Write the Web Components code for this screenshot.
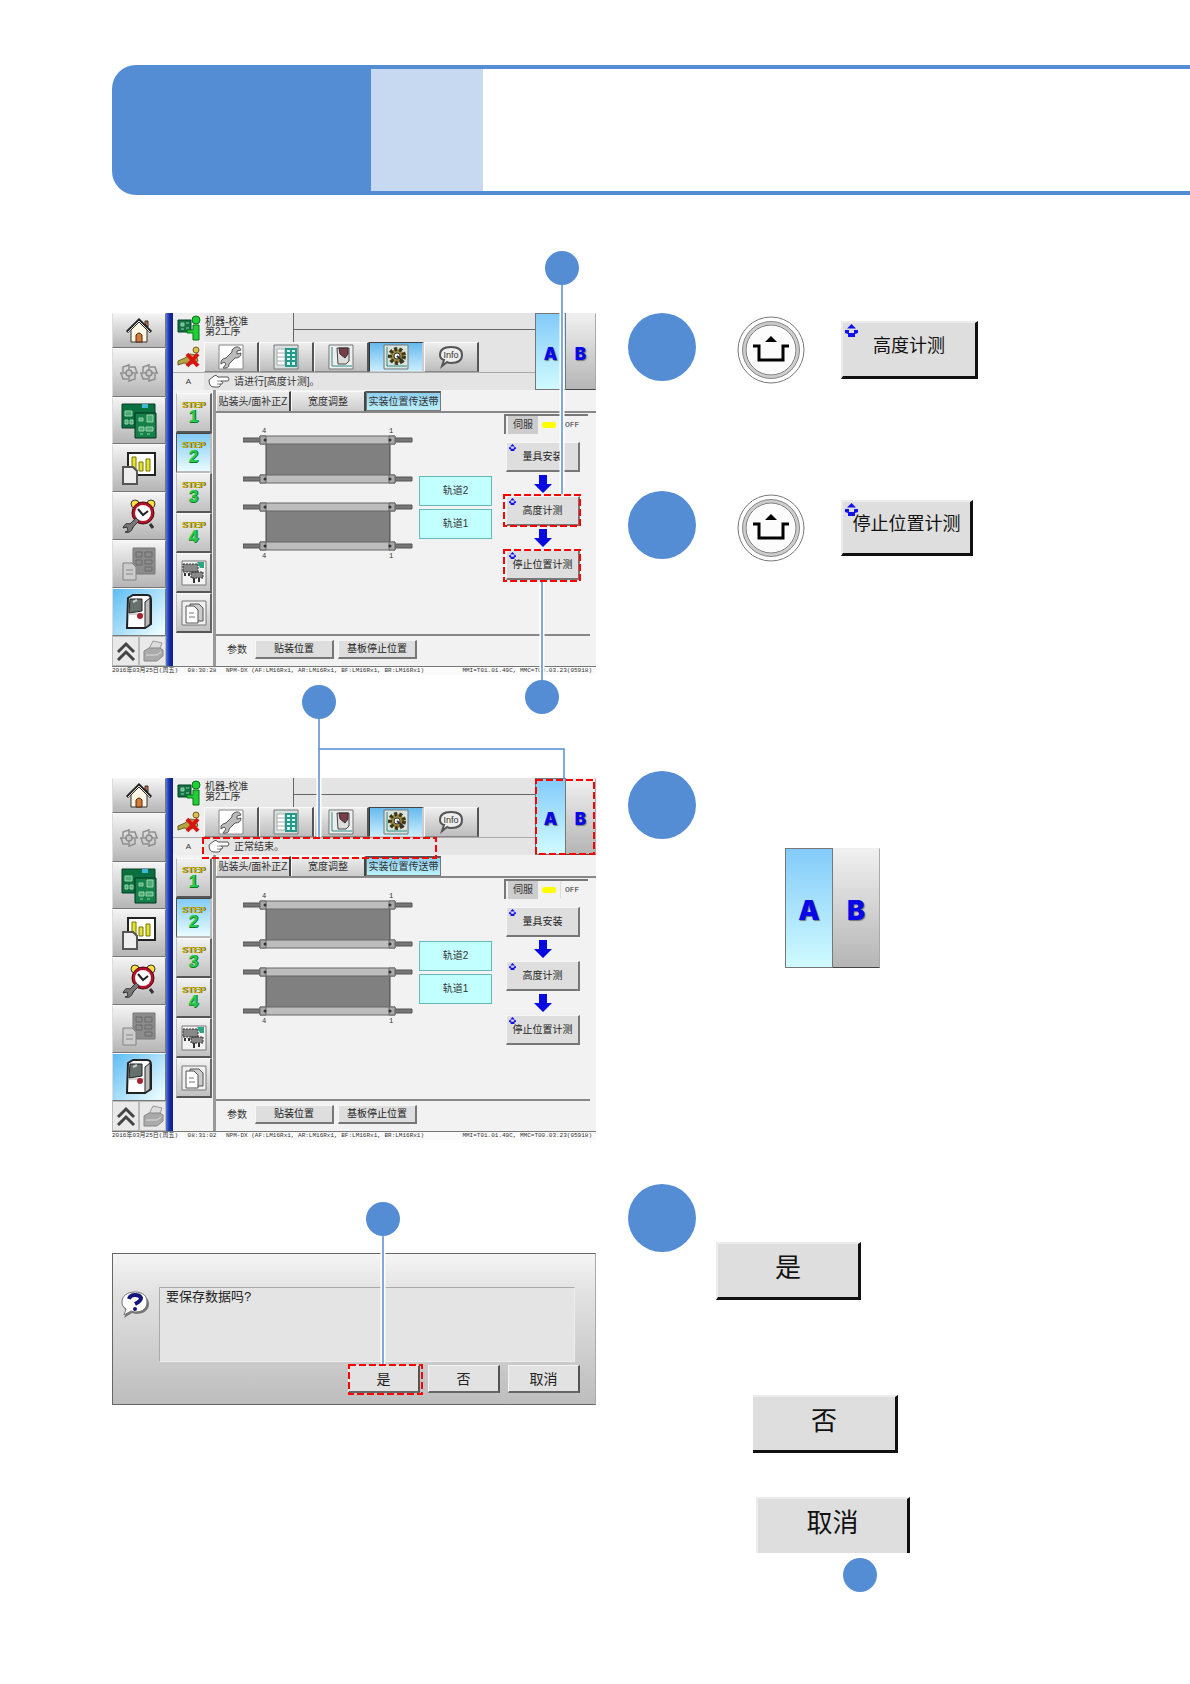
<!DOCTYPE html>
<html lang="zh-CN">
<head>
<meta charset="utf-8">
<title>机器-校准</title>
<style>
    body {
        margin: 0;
        background: #fff;
        color: #111;
        font-family: "Liberation Sans", "Noto Sans CJK SC", sans-serif;
    }
</style>
</head>
<body>
<manual-page></manual-page>

<script>
// Small pictures shared by the machine screens
const FAN = `<path d="M10 3v18M1 12h18M10 4L4 6v5M18 12l-2-6h-5M10 20l6-2v-5M2 12l2 6h5"/><circle cx="10" cy="12" r="3" fill="#c8c8c8"/>`;
const ICONS = {
    home: `<svg width="28" height="28" viewBox="0 0 28 28"><path d="M6 13v12h16V13L14 5z" fill="#fff6e4" stroke="#333"/><path d="M20 4h3v6l-3-3z" fill="#c96b3a" stroke="#333"/><path d="M2 15L14 3l12 12" fill="none" stroke="#222" stroke-width="3"/><path d="M3 15L14 4l11 11" fill="none" stroke="#ddd"/><path d="M11 25v-7q3-4 6 0v7z" fill="#cf7d38" stroke="#53250d"/></svg>`,
    fans: `<svg width="40" height="24" viewBox="0 0 40 24" fill="none" stroke="#8e8e8e" stroke-width="1.500"><g>${FAN}</g><g transform="translate(20 0)">${FAN}</g></svg>`,
    boards: `<svg width="38" height="38" viewBox="0 0 38 38"><path d="M2 2h33v24H2z" fill="#0b7040" stroke="#063c25"/><path d="M22 2h6v4h-6z" fill="#39b8d8"/><path d="M15 11h21v25H15z" fill="#14804a" stroke="#052f1c"/><path d="M5 9h7v5H5zM5 18h3v4H5zM10 18h3v4h-3zM19 16h4v3h-4zM27 13h6v7h-6zM19 25h5v4h-5zM26 25h7v4h-7zM20 32h3M27 32h3" fill="#4cab72" stroke="#9ad2a8"/></svg>`,
    chart: `<svg width="36" height="36" viewBox="0 0 36 36"><path d="M7 3h27v22H7z" fill="#fff" stroke="#222" stroke-width="2"/><path d="M11 7h4v14h-4zM18 12h4v9h-4zM25 9h4v12h-4z" fill="#e3e233" stroke="#777600"/><path d="M2 17h10l4 4v13H2z" fill="#eee" stroke="#555" stroke-width="2"/></svg>`,
    alarm: `<svg width="36" height="36" viewBox="0 0 36 36"><path d="M13 26l-3 4M29 26l3 4" stroke="#333" stroke-width="3"/><circle cx="14" cy="6" r="4" fill="#ffe23b" stroke="#333"/><circle cx="30" cy="6" r="4" fill="#ffe23b" stroke="#333"/><circle cx="22" cy="15" r="11" fill="#b5122a" stroke="#4a0711"/><circle cx="22" cy="15" r="8" fill="#fff"/><path d="M17 11l5 6 5-4" fill="none" stroke="#222" stroke-width="2"/><path d="M15 20l-6 6q-5-2-7 4l4-1 1 4-3 1q6 2 8-5l6-6z" fill="#777" stroke="#333"/></svg>`,
    library: `<svg width="36" height="36" viewBox="0 0 36 36"><path d="M12 2h22v26H12z" fill="#8c8c8c" stroke="#777"/><path d="M15 6h6v5h-6zM24 6h7v5h-7zM15 14h6v5h-6zM24 14h7v4h-7zM24 21h7v4h-7z" fill="none" stroke="#6b6b6b"/><path d="M2 17h9l4 4v13H2z" fill="#ccc" stroke="#828282"/><path d="M5 24h7M5 28h7" stroke="#888"/></svg>`,
    machine: `<svg width="30" height="36" viewBox="0 0 30 36"><path d="M4 4l5-3h14q4 0 4 5v24l-6 4H3z" fill="#fff" stroke="#222" stroke-width="2"/><path d="M21 8l5-4v26l-5 4z" fill="#bcbcbc" stroke="#222"/><path d="M6 5h12v12l-13 2z" fill="#66716e" stroke="#222"/><path d="M9 8l4-2" stroke="#ccc" stroke-width="2"/><path d="M4 20h16" stroke="#aaa"/><circle cx="16" cy="22" r="3" fill="#a5212e"/></svg>`,
    up: `<svg width="20" height="20" viewBox="0 0 20 20" fill="none" stroke="#444" stroke-width="3"><path d="M2 11l8-8 8 8M2 19l8-8 8 8"/></svg>`,
    printer: `<svg width="24" height="24" viewBox="0 0 24 24"><path d="M8 10l4-8 9 2-3 8z" fill="#ddd" stroke="#999"/><path d="M3 12l5-3h11l3 2v6l-6 5H3z" fill="#aaa" stroke="#888"/><path d="M5 16h11l4-3" fill="none" stroke="#ddd"/></svg>`,
    operator: `<svg width="26" height="26" viewBox="0 0 26 26"><path d="M2 5h13v12H2z" fill="#137244" stroke="#063c25"/><path d="M5 8h3v3H5zM10 8h3M10 13h3M5 14h3" fill="#62b77e" stroke="#94ceaa"/><circle cx="20" cy="5" r="4" fill="#20ce35" stroke="#08731a"/><path d="M17 10h6v15h-6v-7h-6v-3h6z" fill="#20ce35" stroke="#08731a"/></svg>`,
    cross: `<svg width="26" height="24" viewBox="0 0 26 24"><circle cx="20" cy="5" r="3" fill="#d9c04a" stroke="#75601a"/><path d="M2 16l7-3 5-4 6 1 2 6-6 3-8-1-6 2z" fill="#b4a444" stroke="#6a6021"/><path d="M11 9l11 12M22 9L11 21" stroke="#dc1313" stroke-width="4"/></svg>`,
    wrench: `<svg width="26" height="26" viewBox="0 0 26 26"><path d="M1 1h24v24H1z" fill="#fff" stroke="#888"/><path d="M16 4q5-3 7 2l-4 1v3l4-1q0 5-6 5l-6 6q0 5-6 4l3-4-2-2-3 2q-1-5 5-6l6-6q-1-2 2-4z" fill="#bbb" stroke="#555"/></svg>`,
    table: `<svg width="26" height="26" viewBox="0 0 26 26"><path d="M1 1h24v24H1z" fill="#d9e1e0" stroke="#777"/><path d="M4 5h8v16H4zM4 9h8M4 13h8M4 17h8" fill="#fff" stroke="#aaa"/><path d="M13 5h10v17H13zM18 5v17M13 9h10M13 13h10M13 17h10" fill="#d6f6ee" stroke="#26998b" stroke-width="2"/></svg>`,
    unit: `<svg width="26" height="26" viewBox="0 0 26 26"><path d="M1 1h24v24H1z" fill="#eee" stroke="#777"/><path d="M4 3v19h20" fill="none" stroke="#2f8a84"/><path d="M9 4h12v13l-3 3h-8z" fill="#ddd" stroke="#444"/><path d="M11 4h9v6l-3 4-5-4z" fill="#7a3b4a" stroke="#333"/></svg>`,
    gear: `<svg width="26" height="26" viewBox="0 0 26 26"><path d="M1 1h24v24H1z" fill="#d7e4df" stroke="#777"/><path d="M4 3v19h20" fill="none" stroke="#2f8a84"/><circle cx="14" cy="12" r="7" fill="#9a8a45" stroke="#3f3818" stroke-width="4" stroke-dasharray="3 2"/><circle cx="14" cy="12" r="3" fill="#fff" stroke="#333"/><path d="M14 12l7 6" stroke="#333" stroke-width="2"/></svg>`,
    chat: `<svg width="26" height="24" viewBox="0 0 26 24"><path d="M13 2c7 0 11 3 11 8s-4 8-11 8c-2 0-3 0-4-1l-5 4 2-6c-3-1-4-3-4-5 0-5 4-8 11-8z" fill="#eee" stroke="#555" stroke-width="2"/><text x="13" y="13" text-anchor="middle" font-size="9" fill="#333" font-family="Liberation Sans">Info</text></svg>`,
    hand: `<svg width="22" height="15" viewBox="0 0 22 15"><path d="M20 3H10q-2-3-4-1L1 6q0 7 5 7h5q2-1 1-3h2q2-2-1-3h7q2-2 0-4z" fill="#fff" stroke="#555"/><path d="M9 7h4M9 10h3" stroke="#888"/></svg>`,
    feeders: `<svg width="26" height="26" viewBox="0 0 26 26"><path d="M1 1h24v24H1z" fill="#f3f3f3" stroke="#777"/><path d="M2 4h15v8H2zM10 12h12v6H10z" fill="#888" stroke="#333" stroke-dasharray="2 1"/><path d="M4 13v3M8 13v3M13 18v5M18 18v4" stroke="#333" stroke-width="2"/><path d="M16 2h7v6h-4z" fill="#2aa583"/></svg>`,
    sheets: `<svg width="26" height="26" viewBox="0 0 26 26"><path d="M1 1h24v24H1z" fill="#f0f0f0" stroke="#777"/><path d="M9 4h9l4 4v13H9z" fill="#ccc" stroke="#555"/><path d="M5 6h8l4 4v13H5z" fill="#fff" stroke="#555"/><path d="M8 13h5M8 17h6" stroke="#777"/></svg>`,
    lift: `<svg width="13" height="13" viewBox="0 0 13 13"><path d="M2 4.500L6.500 0 11 4.500zM0 6h4v3h5V6h4v3l-3 1v3H3v-3L0 9z" fill="#1010f0"/></svg>`,
    arrow: `<svg width="18" height="18" viewBox="0 0 18 18"><path d="M5 0h8v9h5l-9 9-9-9h5z" fill="#0808e0"/></svg>`
};

// Page banner with the solid tab, the light tab and the long ruled frame
class PageBanner extends HTMLElement {
    constructor() {
        super();
        const shadowRoot = this.attachShadow({mode: 'open'});
        shadowRoot.innerHTML = `
            <style>
                :host { display: flex; height: 130px; }
                div { box-sizing: border-box; }
                .solid { flex: 0 0 259px; border-radius: 24px 0 0 24px; background: #548dd4; }
                .light, .rest { border: solid #548dd4; border-width: 4px 0; }
                .light { flex: 0 0 112px; background: #c6d9f1; }
                .rest { flex: 1; }
            </style>
            <div class="solid"></div>
            <div class="light"></div>
            <div class="rest"><slot></slot></div>
        `;
    }
}
customElements.define('page-banner', PageBanner);

// Grey bevelled key. size="large" is used in the instructions, cut="left|bottom" drops an edge
class PanelKey extends HTMLElement {
    constructor() {
        super();
        const shadowRoot = this.attachShadow({mode: 'open'});
        const lift = this.hasAttribute('lift') ? `<span class="lift">${ICONS.lift}</span>` : '';
        shadowRoot.innerHTML = `
            <style>
                :host { display: block; height: 30px; font-size: 10px; }
                button {
                    position: relative; display: block; width: 100%; height: 100%; padding: 0; margin: 0;
                    border: solid; border-width: 1px 2px 2px 1px; border-color: #f6f6f6 #777 #777 #f6f6f6;
                    background: #dedede; color: #222; font: inherit; line-height: 1; white-space: nowrap;
                }
                .lift { position: absolute; left: 2px; top: 1px; display: flex; }
                .lift svg { width: 7px; height: 7px; }
                :host([size=large]) { height: 58px; font-size: 18px; }
                :host([size=large]) button { border-width: 2px 3px 3px 2px; border-color: #ececec #111 #111 #ececec; padding-bottom: 6px; color: #111; }
                :host([size=large]) .lift svg { width: 13px; height: 13px; }
                :host([cut=left]) button { border-left: 0; }
                :host([cut=bottom]) button { border-bottom: 0; }
                :host([tone=dialog]) { font-size: 14px; }
                :host([tone=dialog]) button { background: #e2e2e2; border-color: #f4f4f4 #555 #666 #f4f4f4; }
            </style>
            <button type="button">${lift}<slot></slot></button>
        `;
    }
}
customElements.define('panel-key', PanelKey);

// The A / B side selector
class SideSwitch extends HTMLElement {
    constructor() {
        super();
        const shadowRoot = this.attachShadow({mode: 'open'});
        shadowRoot.innerHTML = `
            <style>
                :host { display: flex; width: 61px; height: 77px; font-size: 17px; }
                :host([size=large]) { width: 95px; height: 120px; font-size: 27px; }
                button {
                    flex: 1; min-width: 0; padding: 5px 0 0; margin: 0; color: #0707e8;
                    font: 900 1em Inter, "Liberation Sans", sans-serif; text-shadow: 1px 1px 1px #777;
                    border: 1px solid #777; background: linear-gradient(#83cbfa, #d0fbff);
                }
                button + button { border-color: #eee #aaa #444 #999; border-left: 0; background: linear-gradient(#f0f0f0, #b5b5b5); }
            </style>
            <button type="button" aria-pressed="true">A</button>
            <button type="button" aria-pressed="false">B</button>
        `;
    }
}
customElements.define('side-switch', SideSwitch);

// Two conveyor tracks seen from above
class TrackDiagram extends HTMLElement {
    constructor() {
        super();
        const shadowRoot = this.attachShadow({mode: 'open'});
        const rail = y => `
            <path d="M0 ${y + 2}h19v4H0zM150 ${y + 2}h19v4h-19z" fill="#777" stroke="#555"/>
            <path d="M17 ${y}h135v8H17z" fill="#bdbdbd" stroke="#666"/>
            <path d="M17 ${y}h6v8h-6zM146 ${y}h6v8h-6z" fill="#aaa" stroke="#666"/>
            <circle cx="22" cy="${y + 4}" r="1.500" fill="#333"/><circle cx="147" cy="${y + 4}" r="1.500" fill="#333"/>`;
        shadowRoot.innerHTML = `
            <style>
                :host { display: block; }
                svg { display: block; }
                text { font: 7px "Liberation Mono", monospace; fill: #333; text-anchor: middle; }
            </style>
            <svg width="170" height="132" viewBox="0 0 170 132">
                <path d="M23 16h124v33H23zM23 83h124v33H23z" fill="#808080" stroke="#444"/>
                ${rail(9)}${rail(48)}${rail(76)}${rail(115)}
                <text x="21" y="6">4</text><text x="148" y="6">1</text>
                <text x="21" y="131">4</text><text x="148" y="131">1</text>
            </svg>
        `;
    }
}
customElements.define('track-diagram', TrackDiagram);

// Full operation screen of the mounter
class MachineScreen extends HTMLElement {
    constructor() {
        super();
        const shadowRoot = this.attachShadow({mode: 'open'});
        const side = [['home', '主页', 35], ['fans', '运转', 49], ['boards', '基板', 47], ['chart', '生产信息', 48], ['alarm', '维护', 48], ['library', '数据', 48], ['machine', '机器', 48]];
        const tools = [['wrench', '设定'], ['table', '列表'], ['unit', '单元'], ['gear', '校准'], ['chat', '信息']];
        shadowRoot.innerHTML = `
            <style>
                :host { display: block; background: #f2f2f2; color: #333; font-size: 10px; line-height: 10px; }
                * { box-sizing: border-box; }
                svg { display: block; flex: none; }
                button { display: flex; align-items: center; justify-content: center; margin: 0; padding: 0; font: inherit; color: inherit; }
                .body { display: grid; grid-template-columns: 54px 7px minmax(0, 1fr); height: 353px; }
                .bar { background: linear-gradient(90deg, #5379d8, #1a2ea5 50%, #101c80); }
                .side { display: flex; flex-direction: column; }
                .side button { width: 100%; border: 1px solid #777; border-top-color: #f8f8f8; border-left-color: #ddd; background: linear-gradient(#f4f4f4, #b5b5b5); }
                .side .machine { background: linear-gradient(135deg, #5dbcf3, #e6faff 90%); }
                .foot { display: flex; flex: 1; }
                .side .foot button { flex: 1; border-color: #bbb; background: #e9e9e9; }
                .main { display: flex; flex-direction: column; min-width: 0; }
                .top { display: flex; height: 77px; background: #e4e4e4; }
                .info { flex: 1; min-width: 0; }
                .row { display: flex; }
                .cell { display: flex; flex: 0 0 31px; align-items: center; justify-content: center; background: #eee; }
                .title { height: 29px; }
                .name { width: 90px; padding: 4px 0 0 1px; border-right: 1px solid #666; background: #e9e9e9; }
                .rule { flex: 1; height: 17px; border-bottom: 1px solid #666; }
                .tools { height: 31px; border-bottom: 1px solid #aaa; }
                .tools button { width: 55px; border: solid; border-width: 1px 2px 1px 1px; border-color: #fafafa #555 #888 #fafafa; background: linear-gradient(#eee, #bdbdbd); }
                .tools .gear { border-color: #444 #ccc #ccc #333; background: linear-gradient(#65b9ee, #cceeff); }
                .message { height: 17px; align-items: center; gap: 4px; }
                .message .cell { height: 17px; font-size: 8px; }
                .lower { display: flex; flex: 1; }
                .steps { display: flex; flex-direction: column; width: 40px; padding: 3px 1px 0 3px; }
                .steps button { flex-direction: column; height: 40px; border: solid; border-width: 1px 2px 2px 1px; border-color: #fafafa #666 #555 #bbb; background: linear-gradient(#f2f2f2, #c1c1c1); font: 900 9px/9px "Liberation Sans", sans-serif; color: #bfae14; text-shadow: 1px 0 #655b08; }
                .steps b { font-size: 17px; line-height: 14px; color: #25cf4b; text-shadow: 1px 0 #08732c, 0 1px #08732c; }
                .steps .on { border-color: #444 #bbb #bbb #555; background: linear-gradient(#83cbf5, #e9fcff); }
                .panel { flex: 1; min-width: 0; border-left: 3px solid #999; }
                .tabs { display: flex; height: 23px; padding-top: 1px; border-bottom: 2px solid #888; }
                .tabs button { width: 75px; white-space: nowrap; border: solid; border-width: 1px 2px 0 1px; border-color: #fafafa #444 #444 #fafafa; background: linear-gradient(#eee, #ccc); }
                .tabs .on { border: 1px solid #777; border-top: 2px solid #555; background: linear-gradient(#8fcdf0, #baf1f8); }
                .work { display: flex; height: 221px; }
                track-diagram { margin: 14px 6px 0 27px; }
                .tracks { display: flex; flex-direction: column; gap: 3px; width: 73px; padding-top: 63px; }
                .tracks span { display: flex; align-items: center; justify-content: center; height: 30px; border: 1px solid #65b9bd; background: #c2ffff; }
                .run { width: 84px; margin: 1px 0 0 12px; }
                .flow { display: flex; flex-direction: column; align-items: center; gap: 3px; width: 78px; padding-top: 8px; }
                .flow panel-key { width: 74px; height: 30px; }
                .servo { display: flex; align-items: center; gap: 4px; height: 20px; padding-left: 2px; border-top: 2px solid #777; border-left: 2px solid #777; }
                .servo label { width: 30px; padding: 4px 5px; background: #ccc; }
                .servo i { width: 14px; height: 6px; border-radius: 2px; background: #ff0; }
                .servo output { padding: 4px 0 4px 4px; border-left: 1px solid #ddd; font: 8px/10px "Liberation Mono", monospace; }
                .params { display: flex; align-items: center; gap: 4px; margin-right: 6px; padding: 4px 0 0 11px; border-top: 2px solid #888; }
                .params span { width: 24px; }
                .params panel-key { width: 79px; height: 19px; }
                .status { display: flex; justify-content: space-between; height: 9px; padding-right: 4px; border-top: 1px solid #777; background: #fafafa; font: 6px/8px "Liberation Mono", "Noto Sans CJK SC", monospace; white-space: pre; }
                .status .time { padding: 0 6px; }
            </style>
            <div class="body">
                <nav class="side">
                    ${side.map(([name, label, h]) => `<button type="button" class="${name}" aria-label="${label}" style="height:${h}px">${ICONS[name]}</button>`).join('')}
                    <div class="foot">
                        <button type="button" aria-label="展开">${ICONS.up}</button>
                        <button type="button" aria-label="打印">${ICONS.printer}</button>
                    </div>
                </nav>
                <div class="bar"></div>
                <div class="main">
                    <div class="top">
                        <div class="info">
                            <div class="row title">
                                <span class="cell">${ICONS.operator}</span>
                                <div class="name">机器-校准<br>第2工序</div>
                                <div class="rule"></div>
                            </div>
                            <div class="row tools">
                                <span class="cell">${ICONS.cross}</span>
                                ${tools.map(([name, label]) => `<button type="button" class="${name}" aria-label="${label}">${ICONS[name]}</button>`).join('')}
                            </div>
                            <div class="row message">
                                <span class="cell">A</span>
                                ${ICONS.hand}
                                <span class="text"><slot></slot></span>
                            </div>
                        </div>
                        <side-switch></side-switch>
                    </div>
                    <div class="lower">
                        <div class="steps">
                            ${[1, 2, 3, 4].map(n => `<button type="button" class="${n === 2 ? 'on' : ''}">STEP<b>${n}</b></button>`).join('')}
                            <button type="button" aria-label="供料">${ICONS.feeders}</button>
                            <button type="button" aria-label="文件">${ICONS.sheets}</button>
                        </div>
                        <div class="panel">
                            <div class="tabs">
                                <button type="button">贴装头/面补正Z</button>
                                <button type="button">宽度调整</button>
                                <button type="button" class="on">实装位置传送带</button>
                            </div>
                            <div class="work">
                                <track-diagram></track-diagram>
                                <div class="tracks"><span>轨道2</span><span>轨道1</span></div>
                                <div class="run">
                                    <div class="servo"><label for="servo">伺服</label><i></i><output id="servo">OFF</output></div>
                                    <div class="flow">
                                        <panel-key lift>量具安装</panel-key>
                                        ${ICONS.arrow}
                                        <panel-key lift>高度计测</panel-key>
                                        ${ICONS.arrow}
                                        <panel-key lift>停止位置计测</panel-key>
                                    </div>
                                </div>
                            </div>
                            <div class="params">
                                <span>参数</span>
                                <panel-key>贴装位置</panel-key>
                                <panel-key>基板停止位置</panel-key>
                            </div>
                        </div>
                    </div>
                </div>
            </div>
            <div class="status">
                <span>2016年03月25日(周五) <span class="time"></span> NPM-DX (AF:LM16Rx1, AR:LM16Rx1, BF:LM16Rx1, BR:LM16Rx1)</span>
                <span>MMI=T01.01.49C, MMC=T00.03.23(05918)</span>
            </div>
        `;
    }

    get time() {
        return this.getAttribute('time');
    }

    connectedCallback() {
        this.shadowRoot.querySelector('.time').textContent = this.time;
    }
}
customElements.define('machine-screen', MachineScreen);

// "Save the data?" message box
class SaveDialog extends HTMLElement {
    constructor() {
        super();
        const shadowRoot = this.attachShadow({mode: 'open'});
        shadowRoot.innerHTML = `
            <style>
                :host { display: block; box-sizing: border-box; height: 152px; padding: 33px 15px 0 8px; border: 1px solid #666; border-right-color: #aaa; background: linear-gradient(#f5f5f5, #e2e2e2 25%, #bdbdbd); }
                .ask { display: flex; gap: 9px; }
                .ask svg { flex: none; margin-top: 4px; }
                p { flex: 1; box-sizing: border-box; height: 75px; margin: 0 5px 0 0; padding: 0 6px; border: 1px solid #aaa; border-right-color: #eee; border-bottom-color: #eee; background: #e4e4e4; color: #222; font-size: 13px; line-height: 17px; }
                .keys { display: flex; justify-content: flex-end; gap: 8px; padding-top: 3px; }
                panel-key { width: 72px; height: 28px; }
            </style>
            <div class="ask">
                <svg width="29" height="29" viewBox="0 0 29 29">
                    <path d="M15 3c8 0 13 4 13 10s-5 10-13 10l-4-1-8 5 3-7c-3-2-4-4-4-7C2 7 7 3 15 3z" fill="#777"/>
                    <path d="M14 1c8 0 12 4 12 10s-4 10-12 10l-4-1-7 4 2-6c-3-2-4-4-4-7C1 5 6 1 14 1z" fill="#fff" stroke="#777"/>
                    <path d="M8 8q1-4 6-4t6 3q0 3-6 6" fill="none" stroke="#16167d" stroke-width="4"/><circle cx="14" cy="18" r="2" fill="#16167d"/>
                </svg>
                <p><slot></slot></p>
            </div>
            <div class="keys">
                <panel-key tone="dialog">是</panel-key>
                <panel-key tone="dialog">否</panel-key>
                <panel-key tone="dialog">取消</panel-key>
            </div>
        `;
    }
}
customElements.define('save-dialog', SaveDialog);

// A picture with a marks layer (slot="marks") laid over it
class MarkedFigure extends HTMLElement {
    constructor() {
        super();
        const shadowRoot = this.attachShadow({mode: 'open'});
        shadowRoot.innerHTML = `
            <style>
                :host { display: block; position: relative; width: 484px; }
                ::slotted(svg) { position: absolute; left: 0; top: 0; overflow: visible; pointer-events: none; }
            </style>
            <slot></slot>
            <slot name="marks"></slot>
        `;
    }
}
customElements.define('marked-figure', MarkedFigure);

// Round push button on the machine body
class RoundSwitch extends HTMLElement {
    constructor() {
        super();
        const shadowRoot = this.attachShadow({mode: 'open'});
        shadowRoot.innerHTML = `
            <style>
                :host { display: block; }
                button { display: block; padding: 0; border: 0; border-radius: 50%; background: none; }
                svg { display: block; }
            </style>
            <button type="button" aria-label="升起">
                <svg width="68" height="68" viewBox="0 0 68 68" fill="none">
                    <circle cx="34" cy="34" r="33" fill="#fff" stroke="#777"/>
                    <circle cx="34" cy="34" r="27" stroke="#ccc" stroke-width="3"/>
                    <circle cx="34" cy="34" r="28.500" stroke="#888"/>
                    <circle cx="34" cy="34" r="25" fill="#fcfcfc" stroke="#777"/>
                    <path d="M16 30h6v14h24V30h6" stroke="#000" stroke-width="3"/>
                    <path d="M28 26l6-6 6 6z" fill="#000"/>
                </svg>
            </button>
        `;
    }
}
customElements.define('round-switch', RoundSwitch);

// Instruction with its round marker
class StepItem extends HTMLElement {
    constructor() {
        super();
        const shadowRoot = this.attachShadow({mode: 'open'});
        shadowRoot.innerHTML = `
            <style>
                :host { display: flex; gap: 20px; align-items: flex-start; }
                .disc { flex: 0 0 68px; height: 68px; border-radius: 50%; background: #548dd4; }
                .content { flex: 1; min-width: 0; }
            </style>
            <div class="disc"></div>
            <div class="content"><slot></slot></div>
        `;
    }
}
customElements.define('step-item', StepItem);

class ManualPage extends HTMLElement {
    constructor() {
        super();
        const shadowRoot = this.attachShadow({mode: 'open'});
        shadowRoot.innerHTML = `
            <style>
                :host { display: block; padding: 65px 0 92px 112px; }
                main { display: grid; grid-template-columns: minmax(484px, 46fr) 54fr; gap: 32px; padding-top: 56px; }
                .first { padding-top: 62px; }
                .second { padding-top: 103px; }
                .third { margin-top: 62px; padding-top: 51px; }
                .line { fill: none; stroke: #548dd4; stroke-width: 1.500; }
                .halo { fill: none; stroke: #fff; stroke-width: 5; }
                .dot { fill: #548dd4; }
                .box { fill: none; stroke: #f00; stroke-width: 2; stroke-dasharray: 7 3; }
                .steps { padding-top: 62px; }
                .high, .stop { height: 178px; }
                .side { height: 413px; margin-top: 102px; }
                .pair { display: flex; align-items: center; gap: 36px; height: 73px; padding-left: 21px; }
                .high panel-key { width: 137px; }
                .stop panel-key { width: 132px; height: 56px; }
                .side side-switch { margin: 77px 0 0 69px; }
                .answers { display: flex; flex-direction: column; padding-top: 58px; }
                .answers panel-key { width: 145px; font-size: 26px; }
                .answers .no { margin: 95px 0 44px 37px; }
                .answers .cancel { width: 154px; height: 56px; margin-left: 40px; }
                .end { width: 34px; height: 34px; margin: 5px 0 0 127px; border-radius: 50%; background: #548dd4; }
            </style>
            <page-banner></page-banner>
            <main>
                <section>
                    <marked-figure class="first">
                        <machine-screen time="08:30:28">请进行[高度计测]。</machine-screen>
                        <svg slot="marks" width="484" height="464">
                            <path class="halo" d="M450 62V243M430 331v93"/>
                            <path class="line" d="M450 34V243M430 331v100"/>
                            <circle class="dot" cx="450" cy="17" r="17"/>
                            <circle class="dot" cx="430" cy="446" r="17"/>
                            <rect class="box" x="392" y="244" width="76" height="31"/>
                            <rect class="box" x="392" y="299" width="76" height="31"/>
                        </svg>
                    </marked-figure>
                    <marked-figure class="second">
                        <machine-screen time="08:31:02">正常结束。</machine-screen>
                        <svg slot="marks" width="484" height="465">
                            <path class="halo" d="M207 103v59"/>
                            <path class="line" d="M207 44v118M207 74h245v30"/>
                            <circle class="dot" cx="207" cy="27" r="17"/>
                            <rect class="box" x="91" y="163" width="233" height="20"/>
                            <rect class="box" x="424" y="105" width="58" height="74"/>
                        </svg>
                    </marked-figure>
                    <marked-figure class="third">
                        <save-dialog>要保存数据吗?</save-dialog>
                        <svg slot="marks" width="484" height="203">
                            <path class="halo" d="M271 51v111"/>
                            <path class="line" d="M271 34v128"/>
                            <circle class="dot" cx="271" cy="17" r="17"/>
                            <rect class="box" x="237" y="163" width="73" height="29"/>
                        </svg>
                    </marked-figure>
                </section>
                <section class="steps">
                    <step-item class="high">
                        <div class="pair"><round-switch></round-switch><panel-key size="large" lift>高度计测</panel-key></div>
                    </step-item>
                    <step-item class="stop">
                        <div class="pair"><round-switch></round-switch><panel-key size="large" lift>停止位置计测</panel-key></div>
                    </step-item>
                    <step-item class="side">
                        <side-switch size="large"></side-switch>
                    </step-item>
                    <step-item>
                        <div class="answers">
                            <panel-key size="large">是</panel-key>
                            <panel-key size="large" cut="left" class="no">否</panel-key>
                            <panel-key size="large" cut="bottom" class="cancel">取消</panel-key>
                            <div class="end"></div>
                        </div>
                    </step-item>
                </section>
            </main>
        `;
    }
}
customElements.define('manual-page', ManualPage);
</script>
</body>
</html>
